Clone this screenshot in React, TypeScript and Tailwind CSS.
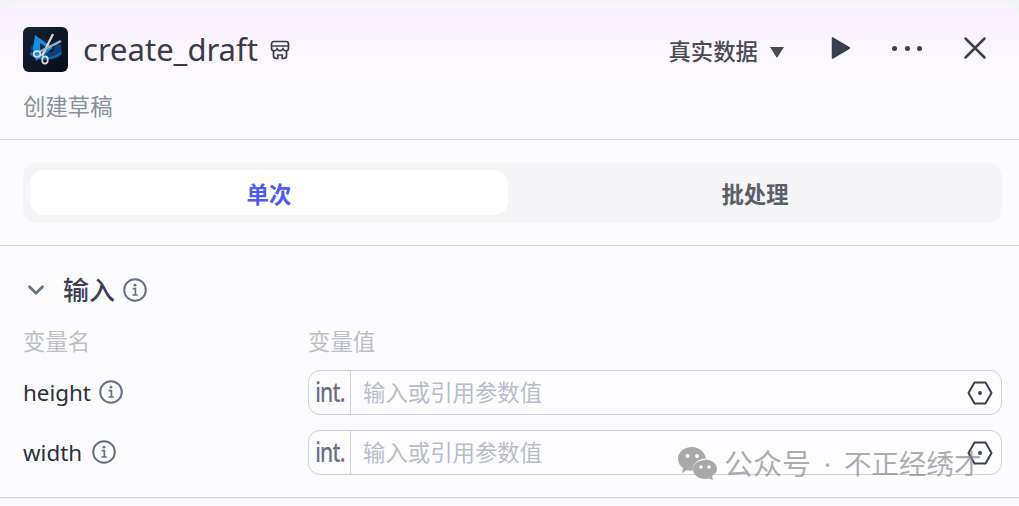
import { ChevronDown } from "lucide-react"

const font = '"Noto Sans", "Noto Sans CJK SC", sans-serif'

function InfoIcon() {
  return (
    <svg width="24" height="24" viewBox="0 0 24 24" fill="none" className="shrink-0">
      <circle cx="12" cy="12" r="10.800" stroke="#676f83" strokeWidth="2" />
      <circle cx="12" cy="7.200" r="1.400" fill="#676f83" />
      <path d="M9.600 10.600h2.800v6.200M9.400 17h5.400" stroke="#676f83" strokeWidth="1.700" />
    </svg>
  )
}

function HexIcon() {
  return (
    <svg width="26" height="24" viewBox="0 0 26 24" fill="none" className="shrink-0">
      <path d="M7.500 1.500h11L24.500 12l-6 10.500h-11L1.500 12z" stroke="#3a3f52" strokeWidth="2" strokeLinejoin="round" />
      <circle cx="13" cy="12" r="2" fill="#3a3f52" />
    </svg>
  )
}

function StoreIcon() {
  return (
    <svg width="20" height="20" viewBox="0 0 20 20" fill="none" className="shrink-0">
      <path d="M4 1.500h12a2.500 2.500 0 0 1 2.500 2.500v4.200c0 1.600-1.200 2.600-2.600 2.600-1.500 0-2.400-1-2.900-2-.6 1-1.700 2-3 2s-2.400-1-3-2c-.5 1-1.400 2-2.900 2-1.400 0-2.600-1-2.600-2.600V4A2.500 2.500 0 0 1 4 1.500z" stroke="#3a3a48" strokeWidth="1.700" />
      <path d="M1.500 6h17M3.500 11v4.500a3 3 0 0 0 3 3h1.300v-3.500h4.400v3.500h1.300a3 3 0 0 0 3-3V11" stroke="#3a3a48" strokeWidth="1.700" />
    </svg>
  )
}

function AppLogo() {
  return (
    <div className="w-[45px] h-[45px] rounded-[6px] bg-gradient-to-br from-[#182233] to-[#070d18] flex items-center justify-center shrink-0">
      <svg width="41" height="41" viewBox="0 0 41 41" fill="none">
        {/* film ribbon */}
        <path d="M6 17c-2 6 2 11 8 13 8 2 18 1 23-5l-1-9-6-2-2 9-13-1-3-9z" fill="#0d3f78" />
        <path d="M5 24c6 7 20 8 31 0" stroke="#1668b4" strokeWidth="2" />
        {/* play shape */}
        <path d="M10 6l18 13-17 13-3-12z" fill="#128fe0" />
        <path d="M15 14l8 5-8 6z" fill="#0a2a50" />
        {/* scissors */}
        <path d="M28 5L20 21 17 27" stroke="#d5d9de" strokeWidth="2.200" />
        <path d="M36 12L20 20 14 23" stroke="#a9b0ba" strokeWidth="2.400" />
        <ellipse cx="12" cy="25" rx="3.400" ry="2.800" stroke="#d8dce1" strokeWidth="1.700" />
        <ellipse cx="20" cy="31" rx="2.800" ry="3.600" stroke="#d8dce1" strokeWidth="1.700" />
      </svg>
    </div>
  )
}

function ParamRow({ name, iconGap }: { name: string; iconGap: string }) {
  return (
    <div className="flex items-center h-[45px]">
      <div className={`w-[285px] flex items-center text-[22.400px] text-[#2b2f3a] ${iconGap}`}>
        <span>{name}</span>
        <InfoIcon />
      </div>
      <div className="flex-1 h-[45px] flex items-center border border-[#cdd0e3] rounded-[12px] bg-[#fdfdff]">
        <div className="w-[42px] h-full flex items-center justify-center border-r border-[#cdd0e3] text-[#676f83]">
          <span className="inline-block text-[27px] font-medium tracking-[-1px] scale-x-[0.780]">int.</span>
        </div>
        <div className="flex-1 pl-[12px] text-[22.400px] text-[#b9bcc9]">输入或引用参数值</div>
        <div className="pr-[8px] flex"><HexIcon /></div>
      </div>
    </div>
  )
}

export default function App() {
  return (
    <div className="relative w-[1019px] h-[506px] overflow-hidden bg-[#f1f3f5] pt-[3px]" style={{ fontFamily: font }}>
      <div className="h-[503px] rounded-t-[16px] bg-[#fcfcff] overflow-hidden">
        {/* header */}
        <div className="h-[137px] border-b border-[#d3d5e0] bg-gradient-to-b from-[#faf0fe] to-[#fcfcff] to-[70%] pl-[23px] pr-[32px]">
          <div className="flex items-center pt-[24px] h-[69px]">
            <AppLogo />
            <span className="ml-[15px] text-[31px] leading-none text-[#3a3a48]">create_draft</span>
            <span className="ml-[12px] flex"><StoreIcon /></span>
            <div className="ml-auto flex items-center text-[#4a4a55]">
              <span className="mt-[4px] text-[22.400px] font-medium">真实数据</span>
              <span className="mt-[7px] ml-[12px] w-0 h-0 border-x-[7px] border-x-transparent border-t-[11px] border-t-[#4a4a55]" />
              <svg width="20" height="22" viewBox="0 0 20 22" className="ml-[47px] -mt-[2px]">
                <path d="M1.500 1v20l17-10z" fill="#3a3f52" stroke="#3a3f52" strokeWidth="1.500" strokeLinejoin="round" />
              </svg>
              <div className="ml-[41px] flex gap-[7.500px] -mt-[2px]">
                <span className="w-[5px] h-[5px] rounded-full bg-[#3a3f52]" />
                <span className="w-[5px] h-[5px] rounded-full bg-[#3a3f52]" />
                <span className="w-[5px] h-[5px] rounded-full bg-[#3a3f52]" />
              </div>
              <svg width="24" height="24" viewBox="0 0 24 24" className="ml-[41px] -mt-[3px]">
                <path d="M2.500 2.500l19 19M21.500 2.500l-19 19" stroke="#3a3f52" strokeWidth="2.500" strokeLinecap="round" />
              </svg>
            </div>
          </div>
          <div className="mt-[20px] text-[22.400px] leading-[30px] text-[#8a8f9f]">创建草稿</div>
        </div>

        {/* tabs */}
        <div className="h-[106px] border-b border-[#d3d5e0] pl-[23px] pr-[17px] pt-[23px]">
          <div className="h-[60px] rounded-[14px] bg-[#f5f5f7] p-[7px] flex">
            <div className="w-[478px] h-[45px] pt-[4px] rounded-[14px] bg-white flex items-center justify-center text-[22.400px] font-semibold text-[#4f5bf0]">单次</div>
            <div className="flex-1 h-[45px] pt-[4px] pl-[7px] flex items-center justify-center text-[22.400px] font-semibold text-[#5a5e68]">批处理</div>
          </div>
        </div>

        {/* inputs */}
        <div className="h-[252px] border-b border-[#d3d5e0] pl-[23px] pr-[17px]">
          <div className="flex items-center h-[34px] pt-[27px] box-content">
            <ChevronDown size={26} strokeWidth={2.500} stroke="#676f83" />
            <span className="ml-[14px] text-[26px] font-medium text-[#3a3f52]">输入</span>
            <span className="ml-[8px] flex"><InfoIcon /></span>
          </div>
          <div className="flex items-center h-[30px] mt-[20px] text-[22.400px] text-[#bdbfc6]">
            <span className="w-[285px]">变量名</span>
            <span>变量值</span>
          </div>
          <div className="flex flex-col gap-[15px] mt-[13px]">
            <ParamRow name="height" iconGap="gap-[8px]" />
            <ParamRow name="width" iconGap="gap-[10px]" />
          </div>
        </div>
      </div>

      {/* watermark */}
      <div className="absolute left-[678px] top-[447px] flex items-center text-[28px] leading-none text-[#8a8a8a]/70">
        <svg width="39" height="33" viewBox="0 0 39 33" fill="#a9a9a9">
          <path d="M14 0C6 0 0 5 0 12c0 4 2 7 5 9l-1 5 5-3c2 .6 4 .8 6 .6-1-6 5-12 13-12C27 5 21 0 14 0z" />
          <path d="M27 13c-6.500 0-12 4-12 9.500S20.500 32 27 32c1.500 0 3-.2 4-.5l4 1.500-1-4c3-2 5-4 5-7 0-5.500-5.500-9.500-12-9.500z" />
          <circle cx="9.500" cy="9" r="2" fill="#fcfcff" />
          <circle cx="19" cy="9" r="2" fill="#fcfcff" />
          <circle cx="23" cy="20" r="1.700" fill="#fcfcff" />
          <circle cx="31" cy="20" r="1.700" fill="#fcfcff" />
        </svg>
        <span className="ml-[7px] text-[29px]">公众号</span>
        <span className="w-[33px] text-center">·</span>
        <span className="text-[27.500px]">不正经绣才</span>
      </div>
    </div>
  )
}
